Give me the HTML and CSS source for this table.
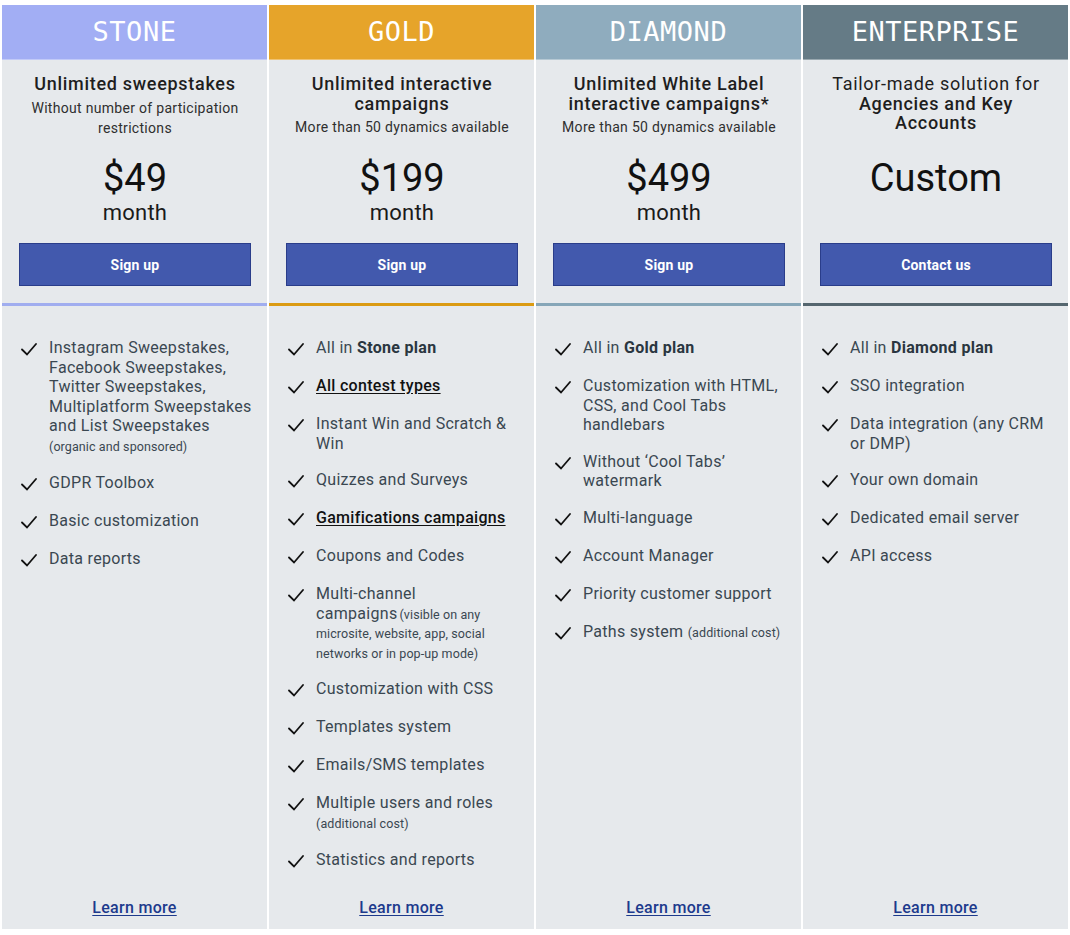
FILE: index.html
```html
<!DOCTYPE html>
<html lang="en">
<head>
<meta charset="utf-8">
<title>Plans</title>
<link rel="stylesheet" href="styles.css">
</head>
<body>
<div class="plans">

  <div class="plan plan-stone">
    <div class="plan-head">STONE</div>
    <div class="plan-top">
      <div class="intro">
        <h3 class="plan-title">Unlimited sweepstakes</h3>
        <p class="plan-sub">Without number of participation restrictions</p>
      </div>
      <div class="price">$49</div>
      <div class="period">month</div>
      <a class="btn" href="#">Sign up</a>
    </div>
    <ul class="features">
      <li><svg class="check" viewBox="0 0 16 13"><path d="M1 6.5 L6 11.5 L15 1"/></svg><span>Instagram Sweepstakes, Facebook Sweepstakes, Twitter Sweepstakes, Multiplatform Sweepstakes and List Sweepstakes <small class="note block">(organic and sponsored)</small></span></li>
      <li><svg class="check" viewBox="0 0 16 13"><path d="M1 6.5 L6 11.5 L15 1"/></svg><span>GDPR Toolbox</span></li>
      <li><svg class="check" viewBox="0 0 16 13"><path d="M1 6.5 L6 11.5 L15 1"/></svg><span>Basic customization</span></li>
      <li><svg class="check" viewBox="0 0 16 13"><path d="M1 6.5 L6 11.5 L15 1"/></svg><span>Data reports</span></li>
    </ul>
    <a class="learn" href="#">Learn more</a>
  </div>

  <div class="plan plan-gold">
    <div class="plan-head">GOLD</div>
    <div class="plan-top">
      <div class="intro">
        <h3 class="plan-title">Unlimited interactive campaigns</h3>
        <p class="plan-sub">More than 50 dynamics available</p>
      </div>
      <div class="price">$199</div>
      <div class="period">month</div>
      <a class="btn" href="#">Sign up</a>
    </div>
    <ul class="features">
      <li><svg class="check" viewBox="0 0 16 13"><path d="M1 6.5 L6 11.5 L15 1"/></svg><span>All in <b>Stone plan</b></span></li>
      <li><svg class="check" viewBox="0 0 16 13"><path d="M1 6.5 L6 11.5 L15 1"/></svg><span><a class="feat-link" href="#">All contest types</a></span></li>
      <li><svg class="check" viewBox="0 0 16 13"><path d="M1 6.5 L6 11.5 L15 1"/></svg><span>Instant Win and Scratch &amp; Win</span></li>
      <li><svg class="check" viewBox="0 0 16 13"><path d="M1 6.5 L6 11.5 L15 1"/></svg><span>Quizzes and Surveys</span></li>
      <li><svg class="check" viewBox="0 0 16 13"><path d="M1 6.5 L6 11.5 L15 1"/></svg><span><a class="feat-link" href="#">Gamifications campaigns</a></span></li>
      <li><svg class="check" viewBox="0 0 16 13"><path d="M1 6.5 L6 11.5 L15 1"/></svg><span>Coupons and Codes</span></li>
      <li><svg class="check" viewBox="0 0 16 13"><path d="M1 6.5 L6 11.5 L15 1"/></svg><span>Multi-channel campaigns<small class="note tight">(visible on any microsite, website, app, social networks or in pop-up mode)</small></span></li>
      <li><svg class="check" viewBox="0 0 16 13"><path d="M1 6.5 L6 11.5 L15 1"/></svg><span>Customization with CSS</span></li>
      <li><svg class="check" viewBox="0 0 16 13"><path d="M1 6.5 L6 11.5 L15 1"/></svg><span>Templates system</span></li>
      <li><svg class="check" viewBox="0 0 16 13"><path d="M1 6.5 L6 11.5 L15 1"/></svg><span>Emails/SMS templates</span></li>
      <li><svg class="check" viewBox="0 0 16 13"><path d="M1 6.5 L6 11.5 L15 1"/></svg><span>Multiple users and roles <small class="note block">(additional cost)</small></span></li>
      <li><svg class="check" viewBox="0 0 16 13"><path d="M1 6.5 L6 11.5 L15 1"/></svg><span>Statistics and reports</span></li>
    </ul>
    <a class="learn" href="#">Learn more</a>
  </div>

  <div class="plan plan-diamond">
    <div class="plan-head">DIAMOND</div>
    <div class="plan-top">
      <div class="intro">
        <h3 class="plan-title">Unlimited White Label interactive campaigns*</h3>
        <p class="plan-sub">More than 50 dynamics available</p>
      </div>
      <div class="price">$499</div>
      <div class="period">month</div>
      <a class="btn" href="#">Sign up</a>
    </div>
    <ul class="features">
      <li><svg class="check" viewBox="0 0 16 13"><path d="M1 6.5 L6 11.5 L15 1"/></svg><span>All in <b>Gold plan</b></span></li>
      <li><svg class="check" viewBox="0 0 16 13"><path d="M1 6.5 L6 11.5 L15 1"/></svg><span>Customization with HTML, CSS, and Cool Tabs handlebars</span></li>
      <li><svg class="check" viewBox="0 0 16 13"><path d="M1 6.5 L6 11.5 L15 1"/></svg><span>Without ‘Cool Tabs’ watermark</span></li>
      <li><svg class="check" viewBox="0 0 16 13"><path d="M1 6.5 L6 11.5 L15 1"/></svg><span>Multi-language</span></li>
      <li><svg class="check" viewBox="0 0 16 13"><path d="M1 6.5 L6 11.5 L15 1"/></svg><span>Account Manager</span></li>
      <li><svg class="check" viewBox="0 0 16 13"><path d="M1 6.5 L6 11.5 L15 1"/></svg><span>Priority customer support</span></li>
      <li><svg class="check" viewBox="0 0 16 13"><path d="M1 6.5 L6 11.5 L15 1"/></svg><span>Paths system <small class="note">(additional cost)</small></span></li>
    </ul>
    <a class="learn" href="#">Learn more</a>
  </div>

  <div class="plan plan-enterprise">
    <div class="plan-head">ENTERPRISE</div>
    <div class="plan-top">
      <div class="intro">
        <h3 class="plan-title ent-title">Tailor-made solution for <span class="strong">Agencies and Key Accounts</span></h3>
      </div>
      <div class="price">Custom</div>
      <div class="period empty"></div>
      <a class="btn" href="#">Contact us</a>
    </div>
    <ul class="features">
      <li><svg class="check" viewBox="0 0 16 13"><path d="M1 6.5 L6 11.5 L15 1"/></svg><span>All in <b>Diamond plan</b></span></li>
      <li><svg class="check" viewBox="0 0 16 13"><path d="M1 6.5 L6 11.5 L15 1"/></svg><span>SSO integration</span></li>
      <li><svg class="check" viewBox="0 0 16 13"><path d="M1 6.5 L6 11.5 L15 1"/></svg><span>Data integration (any CRM or DMP)</span></li>
      <li><svg class="check" viewBox="0 0 16 13"><path d="M1 6.5 L6 11.5 L15 1"/></svg><span>Your own domain</span></li>
      <li><svg class="check" viewBox="0 0 16 13"><path d="M1 6.5 L6 11.5 L15 1"/></svg><span>Dedicated email server</span></li>
      <li><svg class="check" viewBox="0 0 16 13"><path d="M1 6.5 L6 11.5 L15 1"/></svg><span>API access</span></li>
    </ul>
    <a class="learn" href="#">Learn more</a>
  </div>

</div>
</body>
</html>
```

FILE: styles.css
```css
* { box-sizing: border-box; }

body {
  margin: 0;
  background: #ffffff;
  font-family: Roboto, "Noto Sans", sans-serif;
  color: #161616;
}

.plans {
  display: grid;
  grid-template-columns: repeat(4, 1fr);
  column-gap: 2px;
  margin: 5px 2px 0 2px;
  height: 924px;
}

.plan {
  display: flex;
  flex-direction: column;
  background: #e6e9ec;
}

.plan-head {
  height: 55px;
  padding-bottom: 2px;
  display: flex;
  align-items: center;
  justify-content: center;
  font-family: "DejaVu Sans Mono", "Liberation Mono", monospace;
  font-size: 27px;
  letter-spacing: 0.5px;
  color: #ffffff;
  border-bottom: 1px solid rgba(255,255,255,0.35);
}

.plan-stone .plan-head { background: #a2aef4; }
.plan-gold .plan-head { background: #e6a42a; }
.plan-diamond .plan-head { background: #8facbe; }
.plan-enterprise .plan-head { background: #657b86; }

.plan-top {
  padding: 14px 16px 17px 17px;
  text-align: center;
  display: flex;
  flex-direction: column;
  border-bottom: 3px solid #a0adef;
}
.plan-gold .plan-top { border-bottom-color: #db9b13; }
.plan-diamond .plan-top { border-bottom-color: #86a6b8; }
.plan-enterprise .plan-top { border-bottom-color: #55666f; }

.intro {
  height: 64px;
}

.plan-title {
  margin: 0;
  font-size: 18px;
  font-weight: 500;
  line-height: 19.5px;
  letter-spacing: 0.7px;
  color: #1e1e1e;
}

.ent-title {
  font-weight: 400;
  padding: 0 2px;
}
.ent-title .strong { font-weight: 500; }

.plan-sub {
  margin: 4px 0 0 0;
  font-size: 14px;
  line-height: 20px;
  letter-spacing: 0.3px;
  color: #2f2f2f;
}

.price {
  margin-top: 18px;
  font-size: 38px;
  line-height: 44px;
  color: #111111;
}

.period {
  font-size: 22px;
  line-height: 26px;
  letter-spacing: 0.2px;
  color: #1a1a1a;
  height: 26px;
}

.btn {
  margin-top: 17px;
  height: 43px;
  display: flex;
  align-items: center;
  justify-content: center;
  background: #4259ad;
  border: 1px solid #2a3d8a;
  color: #ffffff;
  font-size: 14px;
  font-weight: 700;
  letter-spacing: 0.2px;
  text-decoration: none;
}

.features {
  list-style: none;
  margin: 0;
  padding: 32px 14px 10px 19px;
  flex: 1;
}

.features li {
  display: flex;
  align-items: flex-start;
  gap: 12px;
  min-height: 21px;
  margin-bottom: 17px;
  font-size: 16px;
  line-height: 19.5px;
  letter-spacing: 0.3px;
  color: #3a4751;
}

.features b {
  font-weight: 700;
  color: #2a3640;
}

.check {
  flex: 0 0 16px;
  width: 16px;
  height: 13px;
  margin-top: 5px;
}
.check path {
  fill: none;
  stroke: #111111;
  stroke-width: 1.8;
  stroke-linecap: round;
  stroke-linejoin: miter;
}

.feat-link {
  color: #111111;
  font-weight: 500;
  text-decoration: underline;
  text-underline-offset: 2px;
}

.note {
  font-size: 12.5px;
  line-height: 1;
  letter-spacing: 0.1px;
  color: #3a4751;
}
.note.tight {
  margin-left: 2px;
}
.note.block {
  display: block;
  line-height: 19px;
  margin-top: 1px;
}

.learn {
  align-self: center;
  margin-bottom: 14px;
  font-size: 16px;
  line-height: 20px;
  font-weight: 500;
  letter-spacing: 0.3px;
  color: #1d3a8c;
  text-decoration: underline;
  text-underline-offset: 2px;
}
```
